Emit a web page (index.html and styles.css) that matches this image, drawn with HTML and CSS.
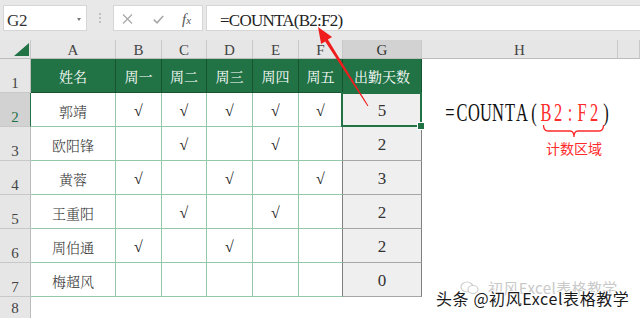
FILE: index.html
```html
<!DOCTYPE html>
<html lang="zh">
<head>
<meta charset="utf-8">
<title>COUNTA</title>
<link rel="stylesheet" href="styles.css">
</head>
<body>
<div class="toolbar">
  <div class="namebox"><span class="nb-text">G2</span><span class="caret"></span></div>
  <div class="grip"><span></span><span></span><span></span></div>
  <div class="fbtns">
    <svg class="ico-x" width="11" height="10" viewBox="0 0 11 10"><path d="M1 0.5 L10 9.5 M10 0.5 L1 9.5" stroke="#a8a8a8" stroke-width="1.2" fill="none"/></svg>
    <svg class="ico-ok" width="11" height="9" viewBox="0 0 11 9"><path d="M0.8 4.6 L4 7.8 L10.2 1" stroke="#a8a8a8" stroke-width="1.6" fill="none"/></svg>
    <span class="fx">f<span class="fx-x">x</span></span>
  </div>
  <div class="finput"><span class="ftext">=COUNTA(B2:F2)</span></div>
</div>

<div class="sheet">
  <div class="ch corner"><i class="tri"></i></div>
  <div class="ch">A</div><div class="ch">B</div><div class="ch">C</div><div class="ch">D</div><div class="ch">E</div><div class="ch">F</div><div class="ch sel-col">G</div><div class="ch">H</div><div class="ch"></div>

  <div class="rh">1</div>
  <div class="hd">姓名</div><div class="hd">周一</div><div class="hd">周二</div><div class="hd">周三</div><div class="hd">周四</div><div class="hd">周五</div><div class="hd">出勤天数</div><div class="blank"></div><div class="blank"></div>

  <div class="rh rh-sel">2</div>
  <div class="td">郭靖</div><div class="td ck">√</div><div class="td ck">√</div><div class="td ck">√</div><div class="td ck">√</div><div class="td ck lf">√</div><div class="tg sel">5</div><div class="blank"></div><div class="blank"></div>

  <div class="rh">3</div>
  <div class="td">欧阳锋</div><div class="td ck"></div><div class="td ck">√</div><div class="td ck"></div><div class="td ck">√</div><div class="td ck lf"></div><div class="tg">2</div><div class="blank"></div><div class="blank"></div>

  <div class="rh">4</div>
  <div class="td">黄蓉</div><div class="td ck">√</div><div class="td ck"></div><div class="td ck">√</div><div class="td ck"></div><div class="td ck lf">√</div><div class="tg">3</div><div class="blank"></div><div class="blank"></div>

  <div class="rh">5</div>
  <div class="td">王重阳</div><div class="td ck"></div><div class="td ck">√</div><div class="td ck"></div><div class="td ck">√</div><div class="td ck lf"></div><div class="tg">2</div><div class="blank"></div><div class="blank"></div>

  <div class="rh">6</div>
  <div class="td">周伯通</div><div class="td ck">√</div><div class="td ck"></div><div class="td ck">√</div><div class="td ck"></div><div class="td ck lf"></div><div class="tg">2</div><div class="blank"></div><div class="blank"></div>

  <div class="rh">7</div>
  <div class="td">梅超风</div><div class="td ck"></div><div class="td ck"></div><div class="td ck"></div><div class="td ck"></div><div class="td ck lf"></div><div class="tg">0</div><div class="blank"></div><div class="blank"></div>

  <div class="rh rh-last">8</div>
  <div class="blank"></div><div class="blank"></div><div class="blank"></div><div class="blank"></div><div class="blank"></div><div class="blank"></div><div class="blank"></div><div class="blank"></div><div class="blank"></div>
</div>

<div class="big"><i>=</i><i>C</i><i>O</i><i>U</i><i>N</i><i>T</i><i>A</i><i>(</i><i class="r">B</i><i class="r">2</i><i class="r">:</i><i class="r">F</i><i class="r">2</i><i>)</i></div>
<svg class="brace" width="64" height="16" viewBox="0 0 64 16"><path d="M1.5 2 Q1.5 8 6 8 L28 8 Q32 8 32 14 Q32 8 36 8 L57 8 Q61.5 8 61.5 2" stroke="#ff2a2a" stroke-width="1.3" fill="none"/></svg>
<div class="note-text">计数区域</div>

<svg class="arrow" width="640" height="318" viewBox="0 0 640 318"><polygon points="318,27 332.1,37 327.9,39.6 368.4,105.7 367.6,106.3 325.2,41.4 321.1,44" fill="#f01d1d"/></svg>

<div class="wm-faint">
  <svg width="20" height="14" viewBox="0 0 20 14"><ellipse cx="7" cy="6" rx="6" ry="5" fill="none" stroke="#cfcfcf" stroke-width="1.2"/><ellipse cx="13" cy="8.5" rx="5" ry="4" fill="#fff" stroke="#cfcfcf" stroke-width="1.2"/></svg>
  <span>初风Excel表格教学</span>
</div>
<div class="wm">头条 @初风Excel表格教学</div>
</body>
</html>
```

FILE: styles.css
```css
* { box-sizing: border-box; margin: 0; padding: 0; }
html, body { width: 640px; height: 318px; overflow: hidden; background: #fff; }
body {
  position: relative;
  font-family: "Liberation Serif", "Noto Serif CJK SC", "Noto Sans CJK SC", serif;
  color: #333;
}

/* formula bar */
.toolbar { height: 40px; background: #e8e8e8; display: flex; padding-top: 5px; }
.namebox {
  margin-left: 3px; width: 84px; height: 26px; background: #fff;
  border: 1px solid #d6d6d6; display: flex; align-items: center;
  justify-content: space-between; padding: 5px 5px 0 3px;
}
.nb-text { font-size: 17px; color: #333; letter-spacing: -0.3px; }
.caret {
  width: 0; height: 0; margin-bottom: 3px;
  border-left: 2.5px solid transparent; border-right: 2.5px solid transparent;
  border-top: 3px solid #777;
}
.grip { width: 26px; height: 26px; display: flex; flex-direction: column; align-items: center; justify-content: center; gap: 2px; }
.grip span { width: 2px; height: 2px; border-radius: 50%; background: #b4b4b4; }
.fbtns {
  width: 90px; height: 26px; background: #fff; border: 1px solid #d6d6d6;
  display: flex; align-items: center; padding: 2px 0 0 8px;
}
.ico-ok { margin-left: 20px; }
.fx { margin-left: 18px; font-style: italic; font-size: 15px; color: #555; font-family: "Liberation Serif", serif; }
.fx-x { font-size: 11px; }
.finput {
  flex: 1; margin-left: 3px; height: 26px; background: #fff;
  border: 1px solid #d6d6d6; border-right: none;
  display: flex; align-items: center; padding: 5px 0 0 13px;
}
.ftext { font-size: 17px; color: #222; letter-spacing: -0.75px; }

/* sheet */
.sheet {
  display: grid;
  grid-template-columns: 31px 85px 46px 45px 46px 46px 44px 79px 196px 22px;
  grid-template-rows: 19px repeat(7, 34px) 21px;
}
.ch {
  background: #e6e6e6; border-right: 1px solid #c8c8c8; border-bottom: 1px solid #bcbcbc;
  font-size: 15px; color: #444; display: flex; align-items: center; justify-content: center;
  padding-top: 2px;
}
.ch.sel-col { background: #d2d2d2; color: #333; }
.corner { justify-content: flex-end; align-items: flex-end; padding: 0 1px 2px 0; }
.tri { display: block; width: 15px; height: 13px; background: #217346; clip-path: polygon(100% 0, 100% 100%, 0 100%); }

.rh {
  background: #e6e6e6; border-right: 1px solid #bcbcbc; border-bottom: 1px solid #c8c8c8;
  font-size: 15px; line-height: 15px; color: #444; display: flex; justify-content: center;
  align-items: flex-end; padding-bottom: 1px;
}
.rh-sel { background: #d2d2d2; color: #217346; border-right-color: #217346; }
.rh-last { align-items: center; padding: 2px 0 0; border-bottom: none; }

.hd {
  background: #217346; color: #fff; border-right: 1px solid #17532f; border-bottom: 1px solid #17532f;
  font-family: "Noto Serif CJK SC", "Noto Sans CJK SC", sans-serif; font-size: 14px;
  display: flex; align-items: center; justify-content: center; padding-top: 1px;
}
.td {
  background: #fff; border-right: 1px solid #93c8a8; border-bottom: 1px solid #93c8a8;
  font-family: "Noto Serif CJK SC", "Noto Sans CJK SC", sans-serif; font-weight: 300;
  font-size: 14px; color: #333;
  display: flex; align-items: center; justify-content: center; padding-top: 3px;
}
.td.ck { font-family: "Liberation Serif", serif; font-size: 16px; font-weight: 400; color: #222; }
.td.lf { border-right-color: #7f7f7f; }
.tg {
  background: #efefef; border-right: 1px solid #7f7f7f; border-bottom: 1px solid #a6a6a6;
  font-size: 17px; color: #333; display: flex; align-items: center; justify-content: center;
  padding-top: 3px;
}
.sel { position: relative; }
.sel::after {
  content: ""; position: absolute; left: -2px; top: -1px; right: -1px; bottom: -1px;
  border: 2px solid #217346;
}
.sel::before {
  content: ""; position: absolute; right: -4px; bottom: -4px; width: 6px; height: 6px;
  background: #217346; border: 1px solid #fff; z-index: 2;
}
.blank { background: #fff; }

/* annotation text box */
.big {
  position: absolute; left: 444px; top: 100px; display: flex;
  font-size: 26px; line-height: 26px; color: #111;
  transform: scaleX(0.6316); transform-origin: 0 0;
}
.big i { font-style: normal; width: 19px; display: flex; justify-content: center; }
.big i.r { color: #ff2a2a; }
.brace { position: absolute; left: 542px; top: 123px; }
.note-text {
  position: absolute; left: 546px; top: 141px; font-size: 14px; line-height: 14px;
  color: #ff2a2a; font-family: "Noto Sans CJK SC", sans-serif;
}
.arrow { position: absolute; left: 0; top: 0; pointer-events: none; }

/* watermarks */
.wm-faint {
  position: absolute; left: 460px; top: 280px; display: flex; align-items: center; gap: 8px;
  font-family: "Noto Sans CJK SC", sans-serif; font-size: 15px; line-height: 16px;
  color: #c9c9c9; letter-spacing: 0.4px;
}
.wm {
  position: absolute; left: 436px; top: 289px;
  font-family: "Noto Sans CJK SC", sans-serif; font-size: 16px; line-height: 18px;
  color: #1a1a1a; letter-spacing: 0.6px; white-space: nowrap;
  text-shadow: 1px 0 #fff, -1px 0 #fff, 0 1px #fff, 0 -1px #fff, 1px 1px #fff, -1px -1px #fff, 1px -1px #fff, -1px 1px #fff;
}
```
